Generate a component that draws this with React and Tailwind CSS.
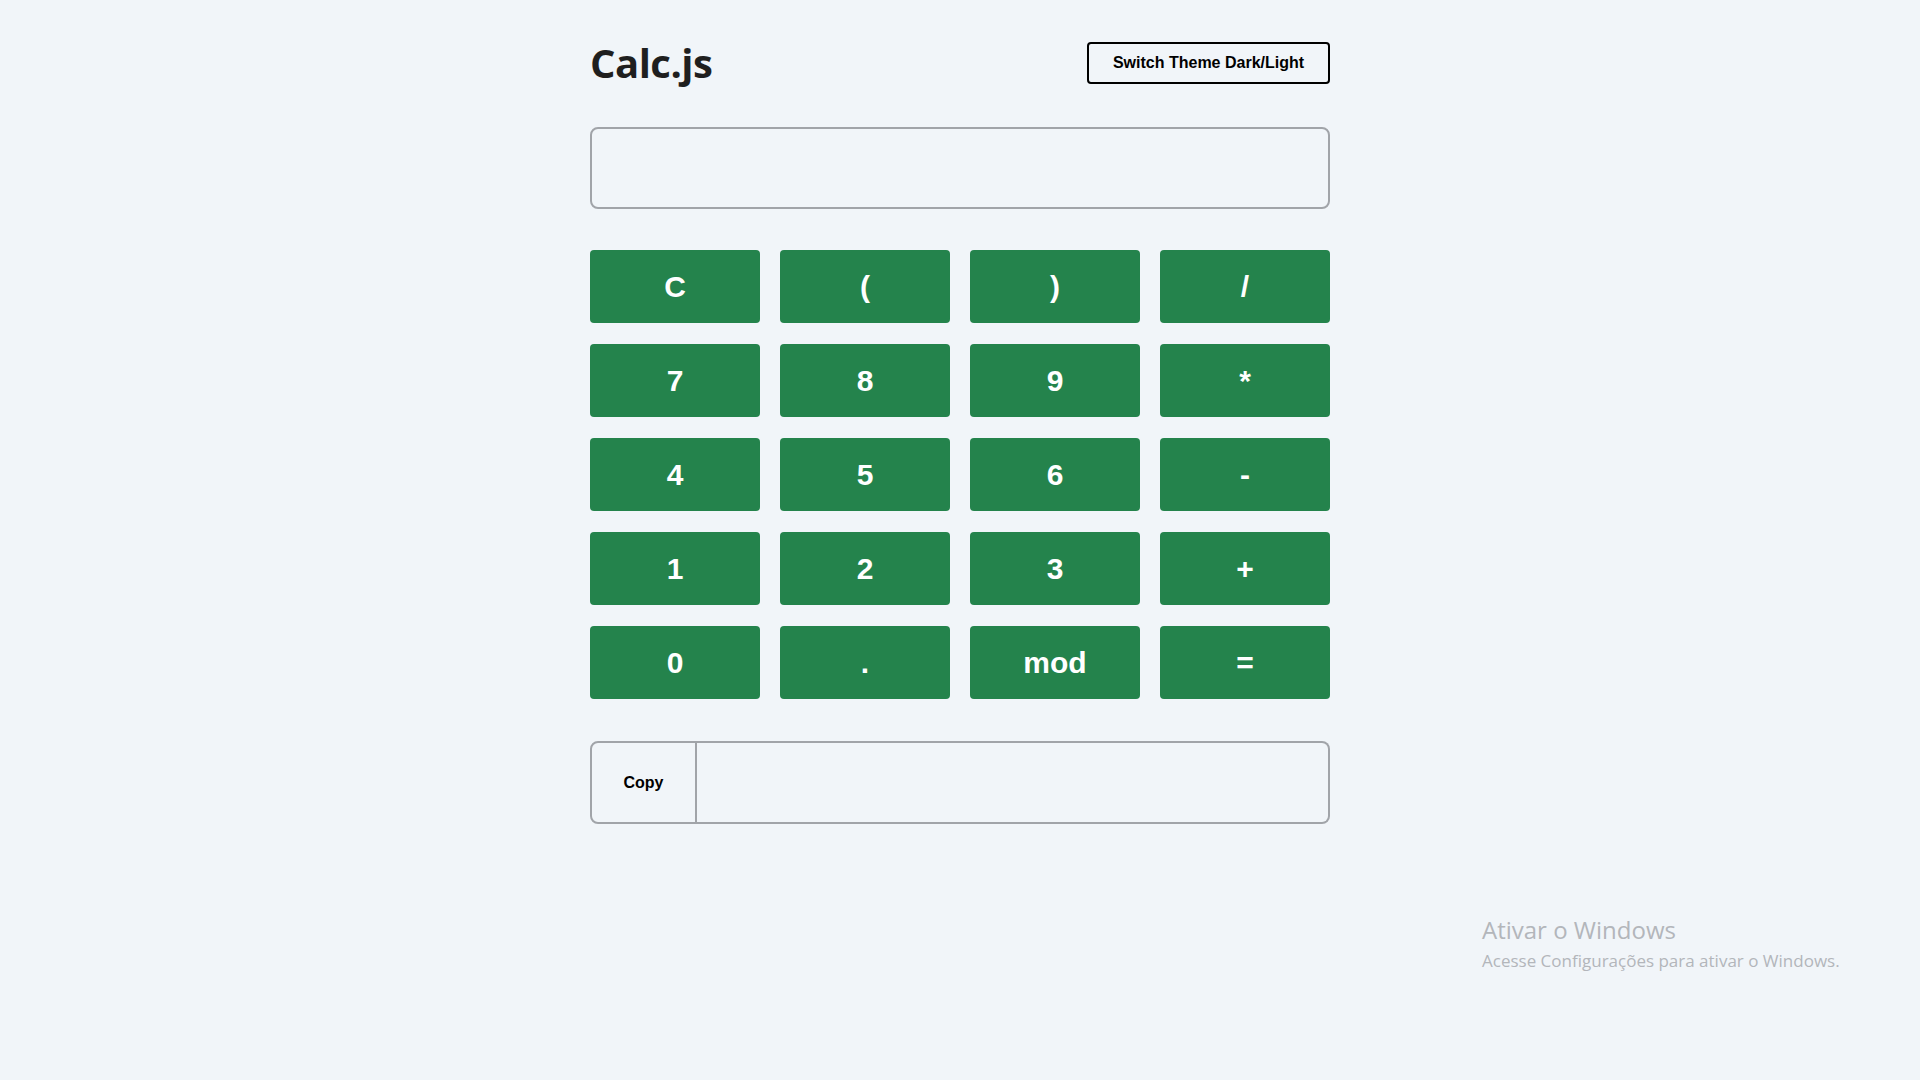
import React, { useState } from 'react';

const keys = ['C', '(', ')', '/', '7', '8', '9', '*', '4', '5', '6', '-', '1', '2', '3', '+', '0', '.', 'mod', '='];

const App = () => {
    const [expr, setExpr] = useState('');
    const [result, setResult] = useState('');

    const press = (k) => {
        if (k === 'C') { setExpr(''); setResult(''); return; }
        if (k === '=') {
            try {
                const out = Function(`"use strict";return (${expr.replace(/mod/g, '%')})`)();
                setResult(String(out));
            } catch (e) {
                setResult('Error');
            }
            return;
        }
        setExpr(expr + k);
    };

    return (
        <div className="relative min-h-screen bg-[#f1f5f9] font-['Liberation_Sans',Arial,sans-serif]">
            <div className="w-[740px] mx-auto pt-[42px]">
                <div className="flex items-center justify-between h-[42px]">
                    <h1 className="text-[40px] leading-none font-bold text-[#1f1f1f] font-['Open_Sans',sans-serif] tracking-[-0.5px]">Calc.js</h1>
                    <button className="h-[42px] w-[243px] border-2 border-black rounded-[4px] bg-[#f1f5f9] text-[16px] font-bold text-black">
                        Switch Theme Dark/Light
                    </button>
                </div>

                <input
                    value={expr}
                    readOnly
                    className="mt-[43px] block w-full h-[82px] border-2 border-[#a1a4a9] rounded-lg bg-[#f1f5f9] px-4 text-3xl outline-none"
                />

                <div className="mt-[41px] grid grid-cols-4 gap-x-5 gap-y-[21px]">
                    {keys.map((k) => (
                        <button
                            key={k}
                            onClick={() => press(k)}
                            className="h-[73px] rounded-[4px] bg-[#24834c] text-white text-[30px] font-bold"
                        >
                            {k}
                        </button>
                    ))}
                </div>

                <div className="mt-[42px] flex h-[83px]">
                    <button
                        onClick={() => navigator.clipboard && navigator.clipboard.writeText(result)}
                        className="w-[107px] h-full border-2 border-[#a1a4a9] rounded-l-lg bg-[#f1f5f9] text-[16px] font-bold text-black"
                    >
                        Copy
                    </button>
                    <input
                        value={result}
                        readOnly
                        className="flex-1 h-full border-2 border-l-0 border-[#a1a4a9] rounded-r-lg bg-[#f1f5f9] px-4 text-2xl outline-none"
                    />
                </div>
            </div>

            {/* windows watermark */}
            <div className="absolute left-[1482px] top-[915px] text-[#b3b6bb] font-['Open_Sans',sans-serif]">
                <div className="text-[24px] leading-[30px]">Ativar o Windows</div>
                <div className="text-[17px] leading-[21px] mt-[5px]">Acesse Configurações para ativar o Windows.</div>
            </div>
        </div>
    );
};

export default App;
